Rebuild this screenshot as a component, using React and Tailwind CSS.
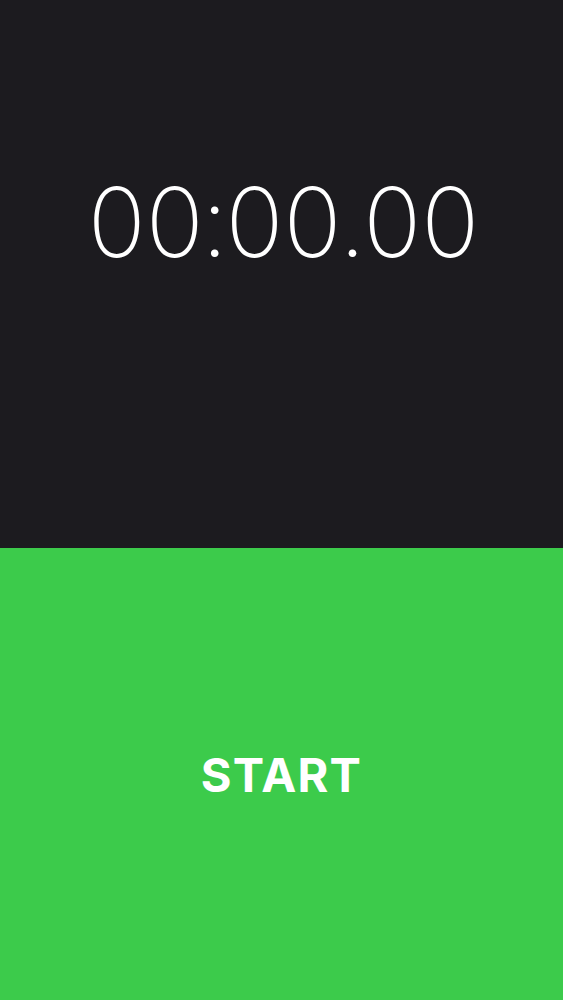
export default function App() {
  return (
    <div className="flex h-[1000px] w-full flex-col">
      <div className="flex h-[548px] items-start justify-center bg-[#1c1b1f] pt-[170px]">
        <span className="font-['Inter',sans-serif] text-[96px] font-extralight leading-[104px] tracking-[-4px] text-white tabular-nums">
          00:00.00
        </span>
      </div>
      <div className="flex flex-1 items-center justify-center bg-[#3ccb4b]">
        <span className="font-['Inter',sans-serif] text-[47px] font-bold leading-none tracking-[1.2px] text-white">
          START
        </span>
      </div>
    </div>
  );
}
